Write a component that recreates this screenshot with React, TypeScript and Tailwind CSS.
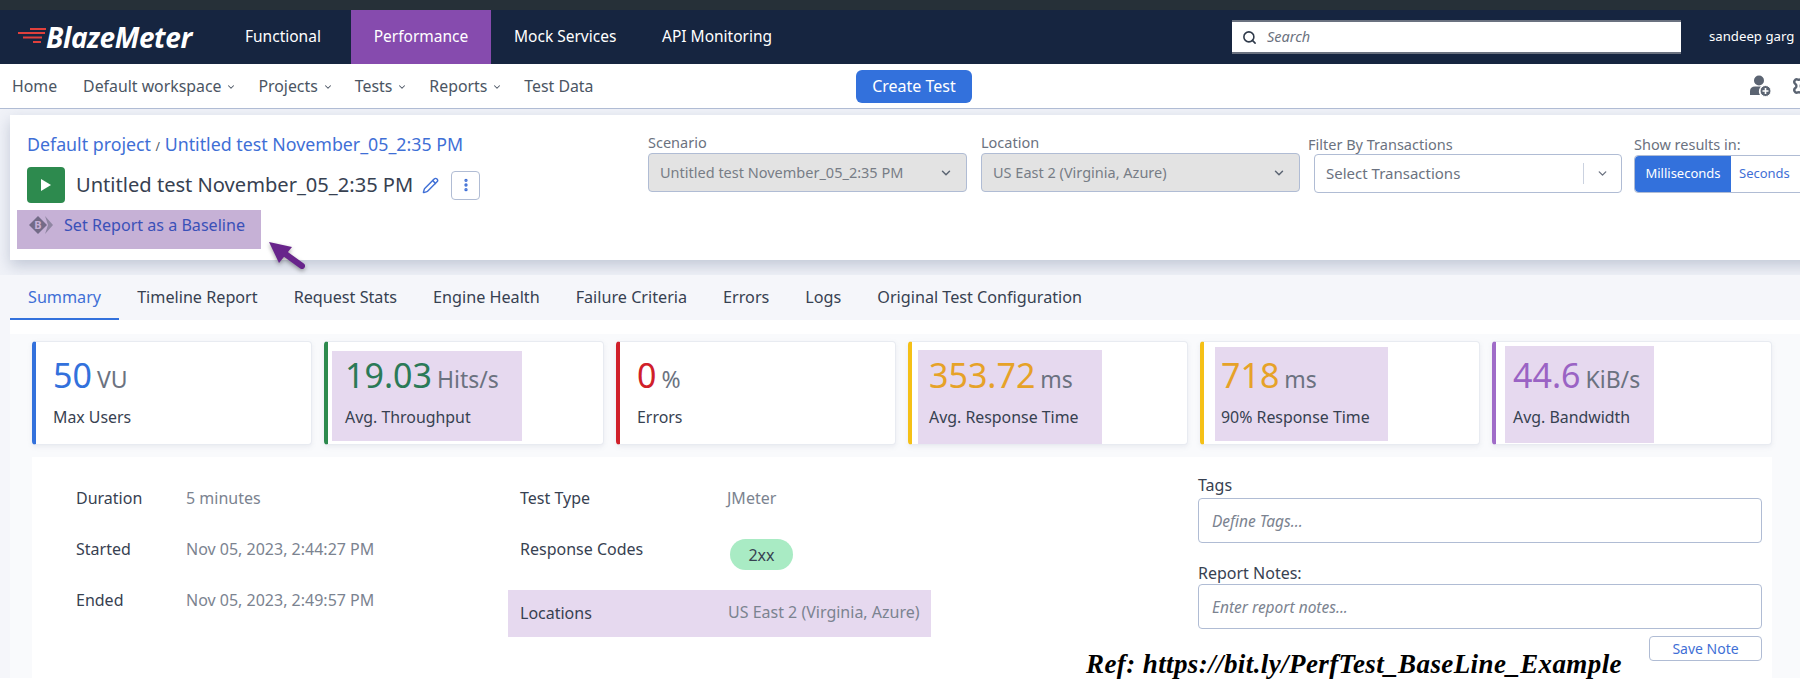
import React from 'react';
import { ChevronDown, EllipsisVertical, Pencil, Search, Settings } from 'lucide-react';

const font = { fontFamily: '"Noto Sans", sans-serif' };

type Stat = {
  value: string;
  unit: string;
  label: string;
  bar: string;
  text: string;
  mark?: string;
};

const stats: Stat[] = [
  { value: '50', unit: 'VU', label: 'Max Users', bar: 'border-l-[#3371dc]', text: 'text-[#3371dc]' },
  { value: '19.03', unit: 'Hits/s', label: 'Avg. Throughput', bar: 'border-l-[#2d8a4e]', text: 'text-[#2b7a57]', mark: 'left-[4px] top-[9px] w-[190px] h-[90px]' },
  { value: '0', unit: '%', label: 'Errors', bar: 'border-l-[#d0202a]', text: 'text-[#d0202a]' },
  { value: '353.72', unit: 'ms', label: 'Avg. Response Time', bar: 'border-l-[#f5c016]', text: 'text-[#e6a228]', mark: 'left-[6px] top-[8px] w-[184px] h-[94px]' },
  { value: '718', unit: 'ms', label: '90% Response Time', bar: 'border-l-[#f5c016]', text: 'text-[#e6a228]', mark: 'left-[11px] top-[5px] w-[173px] h-[94px]' },
  { value: '44.6', unit: 'KiB/s', label: 'Avg. Bandwidth', bar: 'border-l-[#a06cc8]', text: 'text-[#9a63c4]', mark: 'left-[9px] top-[4px] w-[149px] h-[97px]' },
];

const tabs = ['Summary', 'Timeline Report', 'Request Stats', 'Engine Health', 'Failure Criteria', 'Errors', 'Logs', 'Original Test Configuration'];

function MenuLink({ label, caret, className = '' }: { label: string; caret?: boolean; className?: string }) {
  return (
    <span className={`flex items-center gap-[5px] text-[15.85px] text-[#4b5563] ${className}`}>
      {label}
      {caret && <ChevronDown className="w-[10px] h-[10px] mt-[1px]" strokeWidth={2.5} />}
    </span>
  );
}

function GreySelect({ label, value, className }: { label: string; value: string; className: string }) {
  return (
    <div className={`flex flex-col w-[319px] ${className}`}>
      <span className="text-[14.5px] leading-[20px] text-[#6b7280] mb-[1px]">{label}</span>
      <div className="h-[39px] flex items-center justify-between pl-[11px] pr-[13px] bg-[#e3e3e3] border border-[#b0bcd4] rounded text-[14.5px] text-[#777d86]">
        {value}
        <ChevronDown className="w-[14px] h-[14px] text-[#5b6472]" strokeWidth={2.5} />
      </div>
    </div>
  );
}

function Detail({ label, value }: { label: string; value: string }) {
  return (
    <div className="flex h-[51px] text-[16px] leading-[20px]">
      <span className="w-[110px] text-[#374151]">{label}</span>
      <span className="text-[#7b8390]">{value}</span>
    </div>
  );
}

export default function App() {
  return (
    <div className="relative w-[1800px] h-[683px] overflow-hidden bg-white" style={font}>
      <div className="h-[10px] bg-[#263038]" />

      {/* top nav */}
      <nav className="h-[54px] bg-[#162540] flex items-center text-white">
        <div className="w-[245px] pl-[18px] flex items-center">
          <svg width="29" height="20" viewBox="0 0 29 20" className="shrink-0">
            <rect x="12" y="1" width="16" height="2" fill="#e0403c" />
            <rect x="0" y="5" width="27" height="2" fill="#e0403c" />
            <rect x="5" y="9.500" width="19" height="2" fill="#e0403c" />
            <rect x="15" y="14" width="8" height="2" fill="#e0403c" />
          </svg>
          <span className="italic font-bold text-[28px] tracking-[-0.4px] ml-[-1px]" style={{ fontFamily: '"Open Sans", sans-serif' }}>BlazeMeter</span>
        </div>
        <span className="w-[106px] text-[15.5px]">Functional</span>
        <span className="w-[140px] h-full flex items-center justify-center bg-[#864bae] text-[15.5px]">Performance</span>
        <span className="w-[148px] pl-[23px] text-[15.5px]">Mock Services</span>
        <span className="w-[593px] pl-[23px] text-[15.5px]">API Monitoring</span>
        <div className="w-[449px] h-[34px] bg-white border-y-2 border-y-[#6b7280] flex items-center pl-[10px] gap-[10px] text-[#6b7280]">
          <Search className="w-[15px] h-[15px] text-[#2f3a4a]" strokeWidth={2.5} />
          <span className="italic text-[14.5px]">Search</span>
        </div>
        <span className="ml-[28px] text-[13.2px] whitespace-nowrap">sandeep garg</span>
      </nav>

      {/* sub nav */}
      <div className="h-[45px] bg-white border-b border-b-[#b0bcd4] flex items-center pl-[12px] relative">
        <div className="flex items-center gap-[22px] w-[844px] shrink-0 pt-[1px]">
          <MenuLink label="Home" className="mr-[4px]" />
          <MenuLink label="Default workspace" caret />
          <MenuLink label="Projects" caret />
          <MenuLink label="Tests" caret />
          <MenuLink label="Reports" caret />
          <MenuLink label="Test Data" />
        </div>
        <button className="w-[116px] h-[33px] shrink-0 bg-[#3371dc] rounded-md text-white text-[16px]">Create Test</button>
        <div className="ml-[777px] flex items-center gap-[20px] shrink-0">
          <svg width="22" height="22" viewBox="0 0 22 22" fill="#5b6472">
            <circle cx="10" cy="5.500" r="5" />
            <path d="M1 20v-4c0-3 2-4.500 5-4.500h6c-2 2-3 5.500-1 8.500z" />
            <circle cx="16.500" cy="16" r="5.500" stroke="#fff" strokeWidth="1" />
            <path d="M16.500 13v6M13.500 16h6" stroke="#fff" strokeWidth="1.600" />
          </svg>
          <Settings className="w-[26px] h-[26px] text-[#5b6472] shrink-0" strokeWidth={2.2} />
        </div>
      </div>

      {/* report header */}
      <div className="bg-[#f0f2f8] pt-[6px] pl-[10px] pb-[15px]">
        <div className="w-[1830px] h-[145px] bg-white shadow-[0_6px_14px_rgba(90,105,140,0.3)] flex pl-[17px]">
          <div className="w-[621px] flex flex-col pt-[17px]">
            <div className="text-[17.8px] leading-[24px] h-[24px] text-[#3f6fd6] whitespace-nowrap">
              Default project <span className="text-[12px] leading-none text-[#4b5563]">/</span> Untitled test November_05_2:35 PM
            </div>
            <div className="flex items-center mt-[11px] h-[36px]">
              <div className="w-[38px] h-[36px] bg-[#2d8a4e] rounded flex items-center justify-center">
                <svg width="12" height="14" viewBox="0 0 12 14"><path d="M1 1l10 6-10 6z" fill="#fff" /></svg>
              </div>
              <span className="ml-[11px] text-[20.1px] text-[#374151] whitespace-nowrap">Untitled test November_05_2:35 PM</span>
              <Pencil className="ml-[9px] w-[17px] h-[17px] text-[#3f6fd6]" />
              <div className="ml-[12px] w-[29px] h-[29px] border border-[#b0bcd4] rounded flex items-center justify-center">
                <EllipsisVertical className="w-[16px] h-[16px] text-[#3f6fd6]" strokeWidth={3} />
              </div>
            </div>
            <div className="ml-[-10px] mt-[7px] w-[244px] h-[39px] bg-[#c6b1d6] flex pl-[12px] pt-[3px] gap-[10px]">
              <svg width="25" height="20" viewBox="0 0 25 20" className="mt-[2px]">
                <path d="M9 1l9 9-9 9-9-9z" fill="#736b87" />
                <path d="M16 1l8 9-8 9 3-9z" fill="#8f86a2" />
                <text x="9" y="14" textAnchor="middle" fontSize="11" fontWeight="700" fill="#c6b1d6">B</text>
              </svg>
              <span className="text-[16.1px] leading-[24px] text-[#3a50b8]">Set Report as a Baseline</span>
            </div>
          </div>
          <div className="flex pt-[17px]">
            <GreySelect label="Scenario" value="Untitled test November_05_2:35 PM" className="" />
            <GreySelect label="Location" value="US East 2 (Virginia, Azure)" className="ml-[14px]" />
            <div className="flex flex-col w-[308px] ml-[14px] pt-[2px]">
              <span className="text-[14.5px] leading-[20px] text-[#6b7280] ml-[-6px]">Filter By Transactions</span>
              <div className="h-[39px] flex items-center bg-white border border-[#b0bcd4] rounded pl-[11px] text-[15px] text-[#6b7280]">
                <span className="flex-1">Select Transactions</span>
                <span className="w-px h-[21px] bg-[#cbd2e0]" />
                <ChevronDown className="mx-[12px] w-[13px] h-[13px] text-[#6b7280]" strokeWidth={2.5} />
              </div>
            </div>
            <div className="flex flex-col ml-[12px] pt-[2px]">
              <span className="text-[14.5px] leading-[20px] text-[#6b7280]">Show results in:</span>
              <div className="mt-[1px] h-[38px] w-[180px] flex items-stretch border border-[#b0bcd4] rounded text-[13px]">
                <span className="w-[96px] bg-[#3371dc] text-white flex items-center justify-center rounded-l">Milliseconds</span>
                <span className="pl-[8px] text-[#3f6fd6] flex items-center">Seconds</span>
              </div>
            </div>
          </div>
        </div>
      </div>

      {/* tabs */}
      <div className="h-[45px] bg-[#f5f6fa] pl-[10px] flex items-end">
        {tabs.map((tab, i) => (
          <div
            key={tab}
            className={`h-[45px] flex items-center border-b-2 px-[18px] pt-[1px] text-[16.18px] whitespace-nowrap ${
              i === 0 ? 'border-b-[#3371dc] text-[#3f6fd6]' : 'border-b-transparent text-[#374151]'
            }`}
          >
            {tab}
          </div>
        ))}
      </div>

      {/* report body */}
      <div className="bg-[#f5f6fa] pl-[10px]">
        <div className="bg-white pt-[14px]">
          <div className="bg-[#f9fafc] pl-[22px] pt-[7px]">
            <div className="grid grid-cols-6 gap-x-[12px] w-[1740px]">
              {stats.map(stat => (
                <div key={stat.label} className={`relative h-[104px] bg-white border border-[#e8ebf1] border-l-4 rounded ${stat.bar} shadow-[0_2px_5px_rgba(120,130,160,0.12)]`}>
                  {stat.mark && <div className={`absolute bg-[#e6d9ef] ${stat.mark}`} />}
                  <div className="relative pl-[17px] pt-[11px]">
                    <div className="flex items-baseline gap-[5px] h-[48px]">
                      <span className={`text-[34px] leading-[44px] ${stat.text}`}>{stat.value}</span>
                      <span className="text-[23px] text-[#6b7280]">{stat.unit}</span>
                    </div>
                    <div className="mt-[6px] text-[15.9px] leading-[20px] text-[#374151]">{stat.label}</div>
                  </div>
                </div>
              ))}
            </div>

            <div className="mt-[12px] h-[221px] w-[1740px] bg-white flex pl-[44px] pt-[31px] pr-[10px]">
              <div className="w-[444px]">
                <Detail label="Duration" value="5 minutes" />
                <Detail label="Started" value="Nov 05, 2023, 2:44:27 PM" />
                <Detail label="Ended" value="Nov 05, 2023, 2:49:57 PM" />
              </div>
              <div className="w-[678px] text-[16px] leading-[20px]">
                <div className="flex h-[51px]">
                  <span className="w-[207px] text-[#374151]">Test Type</span>
                  <span className="text-[#7b8390]">JMeter</span>
                </div>
                <div className="flex h-[51px]">
                  <span className="w-[210px] text-[#374151]">Response Codes</span>
                  <span className="w-[63px] h-[31px] rounded-full bg-[#a9ebc4] text-[#374151] flex items-center justify-center">2xx</span>
                </div>
                <div className="ml-[-12px] w-[423px] h-[47px] bg-[#e6d9ef] flex items-center pl-[12px]">
                  <span className="w-[208px] text-[#374151] mb-[2px]">Locations</span>
                  <span className="text-[#7b8390] mb-[4px]">US East 2 (Virginia, Azure)</span>
                </div>
              </div>
              <div className="w-[564px] mt-[-13px] text-[16px] leading-[20px] text-[#374151]">
                <div className="h-[20px]">Tags</div>
                <div className="mt-[3px] h-[45px] border border-[#b0bcd4] rounded flex items-center pl-[13px] italic text-[15.5px] text-[#7b8390]">Define Tags...</div>
                <div className="mt-[20px] h-[20px]">Report Notes:</div>
                <div className="mt-[1px] h-[45px] border border-[#b0bcd4] rounded flex items-center pl-[13px] italic text-[15.5px] text-[#7b8390]">Enter report notes...</div>
                <div className="flex justify-end mt-[7px]">
                  <button className="w-[113px] h-[25px] border border-[#b0bcd4] rounded text-[14px] text-[#3f6fd6]">Save Note</button>
                </div>
              </div>
            </div>
          </div>
        </div>
      </div>

      {/* annotations pasted over the screenshot */}
      <svg width="44" height="34" viewBox="0 0 44 34" className="absolute left-[266px] top-[240px] drop-shadow-[0_2px_2px_rgba(0,0,0,0.35)]">
        <path d="M3 2l23 5-13 16z" fill="#68248b" />
        <path d="M18 13l18 13" stroke="#68248b" strokeWidth="6" strokeLinecap="round" />
      </svg>
      <div
        className="absolute left-[1086px] top-[648px] text-[27px] leading-[32px] font-bold italic text-black tracking-[0.4px] whitespace-nowrap"
        style={{ fontFamily: '"Liberation Serif", serif' }}
      >
        Ref: https://bit.ly/PerfTest_BaseLine_Example
      </div>
    </div>
  );
}
